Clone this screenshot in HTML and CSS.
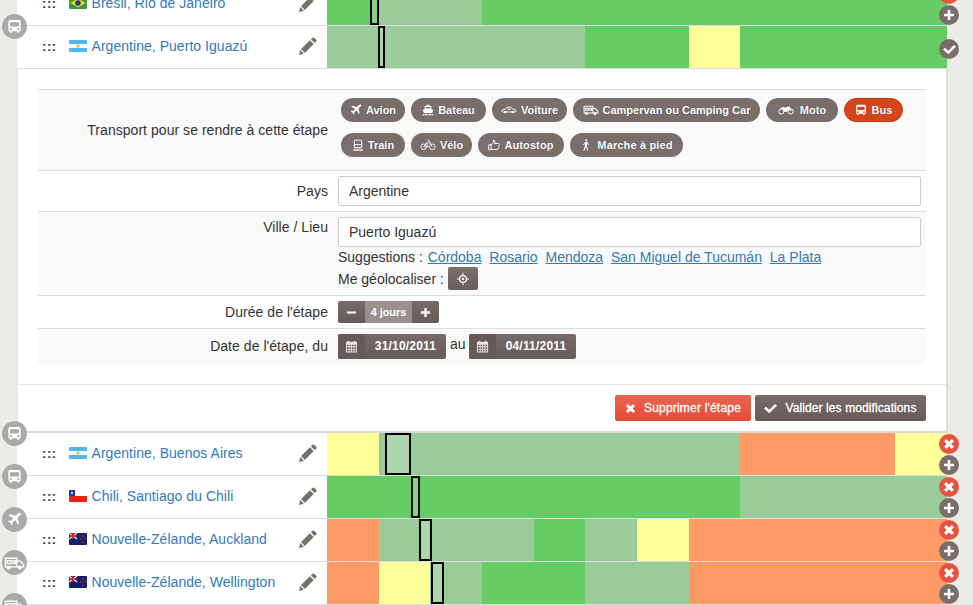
FILE: index.html
```html
<!DOCTYPE html>
<html lang="fr">
<head>
<meta charset="utf-8">
<title>Étapes</title>
<link rel="stylesheet" href="styles.css">
</head>
<body>
<svg class="defs" width="0" height="0" aria-hidden="true">
  <symbol id="i-bus" viewBox="0 0 16 16"><path fill-rule="evenodd" d="M3.5 1h9A2 2 0 0 1 14.5 3v10h-1.6v1.6h-2V13H5.100v1.600h-2V13H1.500V3A2 2 0 0 1 3.500 1zM3.200 3.500v4.500h9.600V3.500zM4 9.700a1.200 1.200 0 1 0 0 2.400 1.200 1.200 0 0 0 0-2.400zm8 0a1.200 1.200 0 1 0 0 2.400 1.200 1.200 0 0 0 0-2.400z"/></symbol>
  <symbol id="i-plane" viewBox="0 0 16 16"><path d="M14.800 1.200c-.9-.9-2.200-.4-3 .4L9.400 4 3 2.300 1.800 3.500l5 3.100-2.700 2.900-2-.4L1 10.200l2.700 1.300L5 14.200l1.100-1.100-.4-2 2.900-2.700 3.100 5 1.200-1.200L11.200 6l2.400-2.400c.8-.8 2-1.600 1.200-2.400z"/></symbol>
  <symbol id="i-boat" viewBox="0 0 16 16"><path d="M6 1h4v1.500h2.500V7L15 8l-1.500 4h-11L1 8l2.500-1V2.500H6zM5 4v2.400l3-1.100 3 1.100V4zM1 13.200c1.200 0 1.500.7 2.300.7s1.200-.7 2.300-.7 1.500.7 2.400.7 1.300-.7 2.400-.7 1.500.7 2.300.7 1.100-.7 2.300-.7V15H1z"/></symbol>
  <symbol id="i-car" viewBox="0 0 20 12"><path fill="none" stroke="currentColor" stroke-width="1.200" d="M1 7.500l1-2 3-.5 2.500-2.500h5L15 5l3 .7.800 1.800-1 1H2zM7.500 5h5"/><circle cx="5.500" cy="8.500" r="1.500"/><circle cx="14.500" cy="8.500" r="1.500"/></symbol>
  <symbol id="i-camper" viewBox="0 0 22 16"><path fill="none" stroke="currentColor" stroke-width="1.400" d="M1.500 3h12v9h-12zM13.500 6h3.500l3.500 3.500V12h-7M3.500 5.500h4v3h-4zM9.500 5.500h2.500v3H9.500z"/><circle cx="5" cy="13" r="2"/><circle cx="16.500" cy="13" r="2"/></symbol>
  <symbol id="i-moto" viewBox="0 0 22 14"><g fill="none" stroke="currentColor" stroke-width="1.300"><circle cx="4.500" cy="9" r="3.500"/><circle cx="17.500" cy="9" r="3.500"/></g><path d="M2 4.500l5-1.500 3 1 5-2 1.500 1 2 5-1.500.5-1.500-3-3 4H8.500L6.500 6z"/></symbol>
  <symbol id="i-train" viewBox="0 0 16 16"><path fill="none" stroke="currentColor" stroke-width="1.300" d="M4.500 1.500h7a1.500 1.500 0 0 1 1.500 1.500v7.500a1 1 0 0 1-1 1H4a1 1 0 0 1-1-1V3a1.500 1.500 0 0 1 1.500-1.500zM3 7.500h10"/><path d="M2 13h12v1H2zM1.500 14.800h13v.9h-13z"/></symbol>
  <symbol id="i-bike" viewBox="0 0 22 16"><g fill="none" stroke="currentColor" stroke-width="1.100"><circle cx="5" cy="10.500" r="3.800"/><circle cx="17" cy="10.500" r="3.800"/><path d="M5 10.500l4-5.500h5l3 5.500M14 5L12 1.500h-1.800M9 5l2.500 5.500H5"/></g></symbol>
  <symbol id="i-thumb" viewBox="0 0 16 16"><path fill="none" stroke="currentColor" stroke-width="1.200" d="M1 7.500h3v7H1zM4 8l3-3.500.5-3c1.800 0 2 2 1.200 4.500H14c1.400 0 1.400 2 .5 2.300.7.600.4 1.900-.4 2.100.4.800 0 1.800-.8 1.900.2 1-.3 1.700-1.300 1.700H7.500L4 13.500"/></symbol>
  <symbol id="i-walk" viewBox="0 0 12 16"><circle cx="6.300" cy="1.800" r="1.500"/><path d="M4.800 4h2.600l2.700 3.300-.9.700-1.900-2v3.500l1.700 5.800-1.200.3-2-5.200-2 5.200-1.300-.3L4.500 9V6.300L3 8l-1-.7z"/></symbol>
  <symbol id="i-pencil" viewBox="0 0 18 18"><path d="M13.300.9a1.500 1.500 0 0 1 2.100 0l1.700 1.700a1.500 1.500 0 0 1 0 2.100l-1.400 1.400-3.800-3.800zM10.900 3.300l3.800 3.800-8.800 8.800-3.800-3.800zM1.300 13.100l3.600 3.600-4.900 1.300z"/></symbol>
  <symbol id="i-times" viewBox="0 0 12 12"><path d="M3.300 1L6 3.700 8.700 1 11 3.300 8.300 6 11 8.700 8.700 11 6 8.300 3.300 11 1 8.700 3.700 6 1 3.300z"/></symbol>
  <symbol id="i-plus" viewBox="0 0 12 12"><path d="M4.700 1h2.600v3.700H11v2.600H7.300V11H4.700V7.300H1V4.700h3.700z"/></symbol>
  <symbol id="i-minus" viewBox="0 0 12 12"><path d="M1 4.800h10v2.400H1z"/></symbol>
  <symbol id="i-check" viewBox="0 0 14 12"><path d="M12 1l2 2-8.300 8.300L0 6l2-2 3.700 3.400z"/></symbol>
  <symbol id="i-cal" viewBox="0 0 14 14"><path fill-rule="evenodd" d="M1 2h2V.8h1.500V2h5V.8H11V2h2v11.500H1zM2 5v1.800h2V5zm3 0v1.800h1.600V5zm2.600 0v1.800H9.200V5zm2.600 0v1.800H12V5zM2 7.800v1.800h2V7.800zm3 0v1.800h1.600V7.800zm2.600 0v1.800h1.600V7.800zm2.600 0v1.800H12V7.800zM2 10.600v1.900h2v-1.900zm3 0v1.900h1.600v-1.900zm2.600 0v1.900h1.600v-1.900zm2.600 0v1.900H12v-1.900z"/></symbol>
  <symbol id="i-target" viewBox="0 0 14 14"><circle cx="7" cy="7" r="4" fill="none" stroke="currentColor" stroke-width="1.400"/><circle cx="7" cy="7" r="1.500"/><path d="M6.400 0h1.200v3H6.400zM6.400 11h1.200v3H6.400zM0 6.400h3v1.200H0zM11 6.400h3v1.200h-3z"/></symbol>
  <symbol id="f-br" viewBox="0 0 18 12"><path fill="#3a9a3a" d="M0 0h18v12H0z"/><path fill="#f5d90a" d="M9 1.500L16.500 6 9 10.500 1.500 6z"/><circle cx="9" cy="6" r="2.800" fill="#1c3f94"/></symbol>
  <symbol id="f-ar" viewBox="0 0 18 12"><path fill="#4db8f0" d="M0 0h18v12H0z"/><path fill="#fff" d="M0 4h18v4H0z"/><circle cx="9" cy="6" r="1.700" fill="#f0c030"/></symbol>
  <symbol id="f-cl" viewBox="0 0 18 12"><path fill="#fff" d="M0 0h18v6H0z"/><path fill="#e5260f" d="M0 6h18v6H0z"/><path fill="#1b3c9c" d="M0 0h6v6H0z"/><circle cx="3" cy="3" r="1" fill="#fff"/></symbol>
  <symbol id="f-nz" viewBox="0 0 18 12"><path fill="#10206c" d="M0 0h18v12H0z"/><path stroke="#e8e8f0" stroke-width="1.400" d="M0 0l8 6M8 0L0 6"/><path stroke="#e02020" stroke-width="1.600" d="M4 0v6M0 3h8"/><g fill="#e02020"><circle cx="14" cy="3" r=".9"/><circle cx="12" cy="6" r=".9"/><circle cx="16" cy="5.500" r=".9"/><circle cx="14" cy="9.500" r=".9"/></g></symbol>
</svg>

<div class="page">
  <div class="list">

    <div class="row">
      <div class="info">
        <span class="handle">:::</span>
        <svg class="flag"><use href="#f-br"/></svg>
        <a class="place" href="#">Brésil, Rio de Janeiro</a>
        <svg class="edit"><use href="#i-pencil"/></svg>
      </div>
      <div class="timeline">
        <i class="seg green" style="width:8.334%"></i><i class="seg light" style="width:16.667%"></i><i class="seg green" style="width:75%"></i>
        <b class="marker" style="left:43px;width:9px"></b>
        <span class="act red act-top"><svg><use href="#i-times"/></svg></span>
        <span class="act gray act-bottom"><svg><use href="#i-plus"/></svg></span>
      </div>
    </div>

    <div class="row">
      <span class="stop"><svg><use href="#i-bus"/></svg></span>
      <div class="info">
        <span class="handle">:::</span>
        <svg class="flag"><use href="#f-ar"/></svg>
        <a class="place" href="#">Argentine, Puerto Iguazú</a>
        <svg class="edit"><use href="#i-pencil"/></svg>
      </div>
      <div class="timeline">
        <i class="seg light" style="width:41.667%"></i><i class="seg green" style="width:16.667%"></i><i class="seg yellow" style="width:8.333%"></i><i class="seg green" style="width:33.333%"></i>
        <b class="marker" style="left:51px;width:7px"></b>
        <span class="act gray act-mid"><svg class="chk"><use href="#i-check"/></svg></span>
      </div>
    </div>

    <div class="panel">
      <div class="form">
        <div class="frow alt tall">
          <div class="lbl">Transport pour se rendre à cette étape</div>
          <div class="val pills">
            <a class="pill p-avion"><svg><use href="#i-plane"/></svg>Avion</a>
            <a class="pill p-bateau"><svg><use href="#i-boat"/></svg>Bateau</a>
            <a class="pill p-voiture"><svg class="w"><use href="#i-car"/></svg>Voiture</a>
            <a class="pill p-camper"><svg class="w"><use href="#i-camper"/></svg>Campervan ou Camping Car</a>
            <a class="pill p-moto"><svg class="w"><use href="#i-moto"/></svg>Moto</a>
            <a class="pill p-bus on"><svg><use href="#i-bus"/></svg>Bus</a>
            <a class="pill p-train"><svg><use href="#i-train"/></svg>Train</a>
            <a class="pill p-velo"><svg class="w"><use href="#i-bike"/></svg>Vélo</a>
            <a class="pill p-stop"><svg><use href="#i-thumb"/></svg>Autostop</a>
            <a class="pill p-pied"><svg><use href="#i-walk"/></svg>Marche à pied</a>
          </div>
        </div>
        <div class="frow pays">
          <div class="lbl">Pays</div>
          <div class="val"><input class="field" value="Argentine"></div>
        </div>
        <div class="frow alt ville">
          <div class="lbl">Ville / Lieu</div>
          <div class="val">
            <input class="field" value="Puerto Iguazú">
            <div class="line sug">Suggestions : <a href="#">Córdoba</a> <a href="#">Rosario</a> <a href="#">Mendoza</a> <a href="#">San Miguel de Tucumán</a> <a href="#">La Plata</a></div>
            <div class="line geo">Me géolocaliser : <button class="geobtn"><svg><use href="#i-target"/></svg></button></div>
          </div>
        </div>
        <div class="frow duree">
          <div class="lbl">Durée de l'étape</div>
          <div class="val"><div class="stepper"><span class="sbtn"><svg><use href="#i-minus"/></svg></span><span class="days">4 jours</span><span class="sbtn"><svg><use href="#i-plus"/></svg></span></div></div>
        </div>
        <div class="frow alt dates">
          <div class="lbl">Date de l'étape, du</div>
          <div class="val datesval">
            <span class="date"><span class="dicon"><svg><use href="#i-cal"/></svg></span><span class="dtext">31/10/2011</span></span>
            <span class="au">au</span>
            <span class="date"><span class="dicon"><svg><use href="#i-cal"/></svg></span><span class="dtext">04/11/2011</span></span>
          </div>
        </div>
      </div>
      <div class="foot">
        <button class="btn danger"><svg><use href="#i-times"/></svg>Supprimer l'étape</button>
        <button class="btn dark"><svg class="chk"><use href="#i-check"/></svg>Valider les modifications</button>
      </div>
    </div>

    <div class="row">
      <span class="stop"><svg><use href="#i-bus"/></svg></span>
      <div class="info">
        <span class="handle">:::</span>
        <svg class="flag"><use href="#f-ar"/></svg>
        <a class="place" href="#">Argentine, Buenos Aires</a>
        <svg class="edit"><use href="#i-pencil"/></svg>
      </div>
      <div class="timeline">
        <i class="seg yellow" style="width:8.334%"></i><i class="seg light" style="width:58.333%"></i><i class="seg orange" style="width:25%"></i><i class="seg yellow" style="width:8.333%"></i>
        <b class="marker" style="left:58px;width:26px"></b>
        <span class="act red act-top"><svg><use href="#i-times"/></svg></span>
        <span class="act gray act-bottom"><svg><use href="#i-plus"/></svg></span>
      </div>
    </div>

    <div class="row">
      <span class="stop"><svg><use href="#i-bus"/></svg></span>
      <div class="info">
        <span class="handle">:::</span>
        <svg class="flag"><use href="#f-cl"/></svg>
        <a class="place" href="#">Chili, Santiago du Chili</a>
        <svg class="edit"><use href="#i-pencil"/></svg>
      </div>
      <div class="timeline">
        <i class="seg green" style="width:66.667%"></i><i class="seg light" style="width:33.333%"></i>
        <b class="marker" style="left:84px;width:9px"></b>
        <span class="act red act-top"><svg><use href="#i-times"/></svg></span>
        <span class="act gray act-bottom"><svg><use href="#i-plus"/></svg></span>
      </div>
    </div>

    <div class="row">
      <span class="stop"><svg><use href="#i-plane"/></svg></span>
      <div class="info">
        <span class="handle">:::</span>
        <svg class="flag"><use href="#f-nz"/></svg>
        <a class="place" href="#">Nouvelle-Zélande, Auckland</a>
        <svg class="edit"><use href="#i-pencil"/></svg>
      </div>
      <div class="timeline">
        <i class="seg orange" style="width:8.334%"></i><i class="seg light" style="width:25%"></i><i class="seg green" style="width:8.333%"></i><i class="seg light" style="width:8.333%"></i><i class="seg yellow" style="width:8.333%"></i><i class="seg orange" style="width:41.667%"></i>
        <b class="marker" style="left:92px;width:13px"></b>
        <span class="act red act-top"><svg><use href="#i-times"/></svg></span>
        <span class="act gray act-bottom"><svg><use href="#i-plus"/></svg></span>
      </div>
    </div>

    <div class="row">
      <span class="stop"><svg class="wide"><use href="#i-camper"/></svg></span>
      <div class="info">
        <span class="handle">:::</span>
        <svg class="flag"><use href="#f-nz"/></svg>
        <a class="place" href="#">Nouvelle-Zélande, Wellington</a>
        <svg class="edit"><use href="#i-pencil"/></svg>
      </div>
      <div class="timeline">
        <i class="seg orange" style="width:8.334%"></i><i class="seg yellow" style="width:8.333%"></i><i class="seg light" style="width:8.333%"></i><i class="seg green" style="width:16.667%"></i><i class="seg light" style="width:16.667%"></i><i class="seg orange" style="width:41.666%"></i>
        <b class="marker" style="left:104px;width:13px"></b>
        <span class="act red act-top"><svg><use href="#i-times"/></svg></span>
        <span class="act gray act-bottom"><svg><use href="#i-plus"/></svg></span>
      </div>
    </div>

    <div class="row">
      <span class="stop"><svg class="wide"><use href="#i-camper"/></svg></span>
    </div>

  </div>
</div>
</body>
</html>
```

FILE: styles.css
```css
* { box-sizing: border-box; }
html, body { height: 100%; }
body {
  margin: 0;
  overflow: hidden;
  background: #ecebe6;
  color: #333;
  font: 14px/20px "Liberation Sans", Arial, sans-serif;
}
a { color: #337ab7; text-decoration: none; }
.defs { position: absolute; }

.page { margin: -17px 26px 0 17px; }
.list { width: 930px; }

.row {
  position: relative;
  display: flex;
  height: 43px;
  background: #fff;
  border-bottom: 1px solid #ddd;
}
.info {
  display: flex;
  align-items: center;
  width: 310px;
  padding-left: 25px;
  padding-bottom: 2px;
}
.handle {
  width: 27px;
  color: #234;
  font-weight: bold;
  font-size: 13px;
  letter-spacing: .6px;
  line-height: 14px;
  margin-top: 1px;
}
.flag { width: 18px; height: 12px; margin-right: 5px; border-radius: 1px; }
.place { flex: 1; white-space: nowrap; letter-spacing: .04px; margin-left: -.5px; }
.edit { width: 18px; height: 18px; margin-right: 10px; fill: #7a6e6b; }

.timeline { position: relative; display: flex; width: 620px; height: 42px; }
.seg { display: block; height: 100%; }
.green { background: #66cc66; }
.light { background: #99cc99; }
.yellow { background: #ffff99; }
.orange { background: #ff9966; }
.marker {
  position: absolute;
  top: 0;
  height: 42px;
  border: 2px solid #000;
  background: rgba(255, 255, 255, .2);
}

.stop {
  position: absolute;
  left: -15px;
  top: -12px;
  z-index: 2;
  display: flex;
  align-items: center;
  justify-content: center;
  width: 25px;
  height: 25px;
  border-radius: 50%;
  background: #aaa;
}
.stop svg { width: 15px; height: 15px; fill: #fff; color: #fff; }
.stop svg.wide { width: 21px; height: 16px; }

.act {
  position: absolute;
  left: 612px;
  z-index: 2;
  display: flex;
  align-items: center;
  justify-content: center;
  width: 20px;
  height: 20px;
  border-radius: 50%;
}
.act svg { width: 12px; height: 12px; fill: #fff; }
.act svg.chk { width: 13px; height: 11px; }
.act.red { background: #e8533f; }
.act.gray { background: #7a6e6b; }
.act-top { top: 1px; }
.act-bottom { top: 22px; }
.act-mid { top: 13px; }

.panel {
  height: 364px;
  margin-right: -1px;
  padding: 20px 20px 0;
  background: #fff;
  border-right: 2px solid #ddd;
  border-left: 1px solid #e4e4e4;
  border-bottom: 2px solid #d8d8d8;
}
.form { border-top: 1px solid #ddd; }
.frow { display: flex; border-bottom: 1px solid #ddd; }
.frow:last-child { border-bottom: 0; }
.alt { background: #f9f9f9; }
.lbl {
  width: 290px;
  text-align: right;
  flex: none;
  letter-spacing: .04px;
}
.val { flex: 1; padding-left: 10px; padding-right: 5px; }
.tall { height: 81px; }
.tall .lbl { padding-top: 30px; }
.pays { height: 41px; }
.pays .lbl { padding-top: 10px; }
.pays .val { padding-top: 5px; }
.ville { height: 84px; }
.ville .lbl { padding-top: 5px; }
.ville .val { padding-top: 5px; }
.duree { height: 33px; }
.duree .lbl { padding-top: 6px; }
.duree .val { padding-top: 5px; }
.dates { height: 35px; }
.dates .lbl { padding-top: 7px; }
.dates .val { padding-top: 5px; }

.pills {
  display: flex;
  flex-wrap: wrap;
  align-content: flex-start;
  gap: 11px 6px;
  padding-top: 8px;
  padding-left: 13px;
}
.pill {
  display: flex;
  align-items: center;
  justify-content: center;
  gap: 4px;
  height: 24px;
  border-radius: 12px;
  background: #7a6e6b;
  color: #fff;
  font-size: 11px;
  font-weight: bold;
  text-shadow: 0 0 1px rgba(0, 0, 0, .5);
  white-space: nowrap;
}
.pill svg { width: 12px; height: 12px; fill: #fff; color: #fff; flex: none; }
.pill svg.w { width: 16px; height: 12px; }
.pill.on { background: #d4451a; border: 1px solid #c23c13; }
.p-avion { width: 64px; }
.p-bateau { width: 75px; }
.p-voiture { width: 75px; }
.p-camper { width: 187px; }
.p-moto { width: 72px; gap: 6px; }
.p-bus { width: 59px; gap: 5px; }
.p-train { width: 64px; }
.p-velo { width: 61px; }
.p-stop { width: 86px; letter-spacing: .1px; }
.p-pied { width: 113px; gap: 5px; letter-spacing: .15px; }

.field {
  display: block;
  width: 100%;
  height: 30px;
  padding: 0 10px;
  border: 1px solid #ccc;
  border-radius: 2px;
  background: #fff;
  color: #333;
  font: inherit;
}
.line { white-space: nowrap; }
.sug a { text-decoration: underline; margin-left: 4px; }
.sug a:first-child { margin-left: 1px; }
.geo { display: flex; align-items: center; gap: 4px; height: 23px; }
.geobtn {
  display: flex;
  align-items: center;
  justify-content: center;
  width: 30px;
  height: 23px;
  padding: 0;
  border: 0;
  border-radius: 2px;
  background: linear-gradient(#7a6e6b, #6a5e5c);
}
.geobtn svg { width: 12px; height: 12px; fill: #fff; color: #fff; }

.stepper {
  display: flex;
  width: 101px;
  height: 22px;
  border-radius: 2px;
  overflow: hidden;
  color: #fff;
}
.sbtn {
  display: flex;
  align-items: center;
  justify-content: center;
  width: 27px;
  background: linear-gradient(#776b69, #675b59);
}
.sbtn svg { width: 11px; height: 11px; fill: #fff; }
.days {
  width: 47px;
  background: #9a918e;
  font-size: 11px;
  font-weight: bold;
  line-height: 22px;
  text-align: center;
  letter-spacing: -.1px;
}
.datesval { display: flex; gap: 4px; align-items: flex-start; }
.au { width: 15px; }
.date {
  display: flex;
  height: 25px;
  border-radius: 2px;
  overflow: hidden;
  color: #fff;
  background: linear-gradient(#776b69, #675b59);
  font-size: 12px;
  font-weight: bold;
  line-height: 25px;
  letter-spacing: .2px;
}
.dicon {
  display: flex;
  align-items: center;
  justify-content: center;
  width: 27px;
  background: #655a58;
}
.dicon svg { width: 13px; height: 13px; fill: #e8e4e2; }
.dtext { width: 81px; text-align: center; }
.date:last-child .dtext { width: 80px; }

.foot {
  display: flex;
  justify-content: flex-end;
  gap: 4px;
  margin: 20px -20px 0;
  padding: 10px 20px 0;
  border-top: 1px solid #e8e8e8;
}
.btn {
  display: flex;
  align-items: center;
  justify-content: center;
  gap: 8px;
  height: 26px;
  padding: 0;
  border: 0;
  border-radius: 2px;
  color: #fff;
  font: 12px/26px "Liberation Sans", Arial, sans-serif;
  -webkit-text-stroke: .3px #fff;
}
.btn svg { width: 11px; height: 11px; fill: #fff; }
.btn svg.chk { width: 13px; height: 11px; }
.danger { width: 136px; background: linear-gradient(#ea6552, #e34c36); letter-spacing: .2px; }
.dark { width: 171px; background: linear-gradient(#786c6a, #675b59); letter-spacing: .1px; }
```
